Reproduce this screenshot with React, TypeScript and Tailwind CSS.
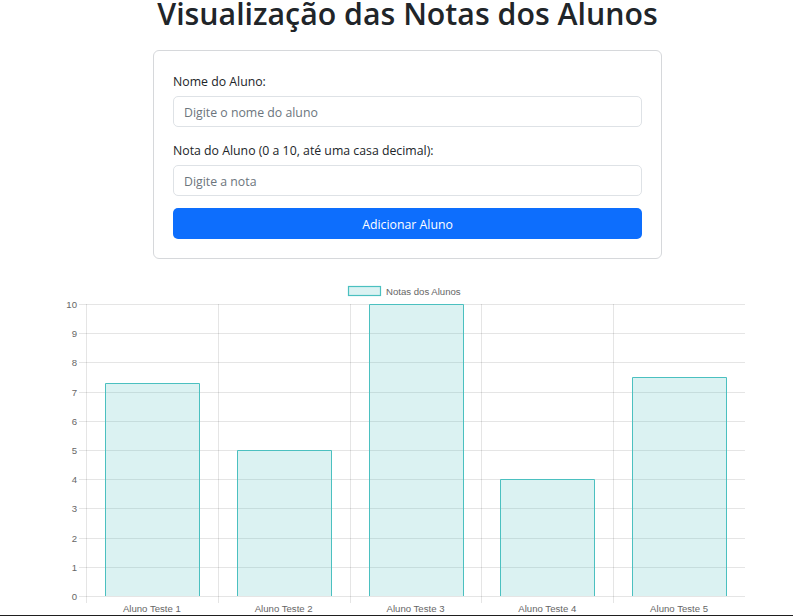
const students = [
  { name: "Aluno Teste 1", grade: 7.3 },
  { name: "Aluno Teste 2", grade: 5 },
  { name: "Aluno Teste 3", grade: 10 },
  { name: "Aluno Teste 4", grade: 4 },
  { name: "Aluno Teste 5", grade: 7.5 },
];

// chart area in page coordinates
const left = 86;
const right = 745;
const top = 304;
const bottom = 596;
const step = (bottom - top) / 10;
const colW = (right - left) / students.length;
const barW = 94;

function GradesChart() {
  return (
    <svg width="793" height="357" className="block" style={{ fontFamily: '"Liberation Sans", Arial, sans-serif' }}>
      <g transform="translate(0,-259)">
        {/* legend */}
        <rect x="348.5" y="286.5" width="32" height="9" fill="rgba(75,192,192,0.2)" stroke="#4bc0c0" strokeWidth="1.2" />
        <text x="386" y="294.5" fontSize="9.6" fill="#666">
          Notas dos Alunos
        </text>

        {/* horizontal grid + y ticks */}
        {Array.from({ length: 11 }, (_, i) => {
          const y = Math.round(bottom - i * step) + 0.5;
          return (
            <g key={i}>
              <line x1="79" x2={right} y1={y} y2={y} stroke="rgba(0,0,0,0.1)" strokeWidth="1" />
              <text x="77" y={y + 3.3} fontSize="9.6" fill="#666" textAnchor="end">
                {i}
              </text>
            </g>
          );
        })}

        {/* vertical grid */}
        {students.map((_, j) => {
          const x = Math.round(left + j * colW) + 0.5;
          return <line key={j} x1={x} x2={x} y1={top} y2="603" stroke="rgba(0,0,0,0.1)" strokeWidth="1" />;
        })}

        {/* bars */}
        {students.map((s, j) => {
          const cx = left + j * colW + colW / 2;
          const x0 = Math.round(cx - barW / 2) + 0.5;
          const x1 = x0 + barW;
          const y0 = Math.round(bottom - s.grade * step) + 0.5;
          return (
            <g key={s.name}>
              <rect x={x0} y={y0} width={barW} height={bottom - y0} fill="rgba(75,192,192,0.2)" />
              <path
                d={`M${x0} ${bottom} L${x0} ${y0} L${x1} ${y0} L${x1} ${bottom}`}
                fill="none"
                stroke="#4bc0c0"
                strokeWidth="1"
              />
              <text x={cx} y="611.5" fontSize="9.6" fill="#666" textAnchor="middle">
                {s.name}
              </text>
            </g>
          );
        })}
      </g>
    </svg>
  );
}

export default function App() {
  return (
    <div className="min-h-[616px] overflow-hidden bg-white text-[#212529]" style={{ fontFamily: '"Open Sans", "Noto Sans", sans-serif' }}>
      <div className="pl-[22px] pt-[1px]">
        <h1 className="mb-[23px] text-center text-[30.3px] font-semibold leading-[26px]">
          Visualização das Notas dos Alunos
        </h1>

        {/* Form card */}
        <div className="mx-auto w-[509px] rounded-[6px] border border-[#d6d8db] px-[19px] pb-[19px] pt-[21px]">
          <label className="mb-[5px] block text-[12.3px] leading-[19px]">Nome do Aluno:</label>
          <input
            className="mb-[14px] block h-[31px] w-full rounded-[5px] border border-[#dee2e6] px-[10px] pt-[2px] text-[12.3px] placeholder:text-[#6c757d] focus:outline-none"
            placeholder="Digite o nome do aluno"
          />
          <label className="mb-[5px] block text-[12.3px] leading-[19px]">
            Nota do Aluno (0 a 10, até uma casa decimal):
          </label>
          <input
            className="mb-[12px] block h-[31px] w-full rounded-[5px] border border-[#dee2e6] px-[10px] pt-[2px] text-[12.3px] placeholder:text-[#6c757d] focus:outline-none"
            placeholder="Digite a nota"
          />
          <button className="block h-[31px] w-full rounded-[5px] bg-[#0d6efd] pt-[3px] text-[12.3px] text-white">
            Adicionar Aluno
          </button>
        </div>
      </div>

      <GradesChart />

      <div className="fixed inset-x-0 bottom-0 h-px bg-[#1f1f1f]" />
    </div>
  );
}
